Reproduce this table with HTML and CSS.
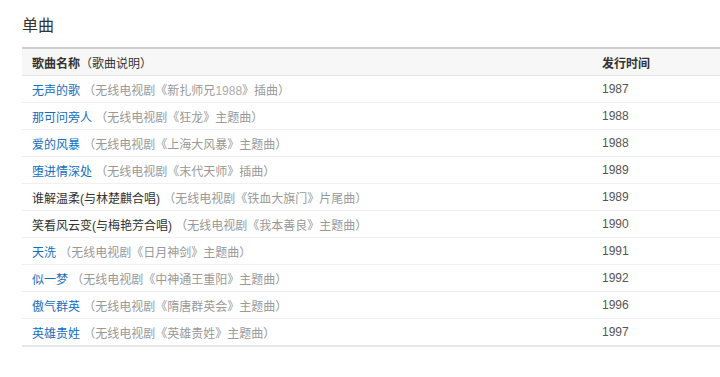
FILE: index.html
```html
<!DOCTYPE html>
<html lang="zh">
<head>
<meta charset="utf-8">
<link rel="stylesheet" href="styles.css">
</head>
<body>
<div class="page">
  <h3 class="title">单曲</h3>
  <table class="songs">
    <thead>
      <tr><th class="c-name"><b>歌曲名称</b><span class="sub">（歌曲说明）</span></th><th class="c-year"><b>发行时间</b></th></tr>
    </thead>
    <tbody>
      <tr><td><a class="song">无声的歌</a> <span class="desc">（无线电视剧《新扎师兄<span class="num">1988</span>》插曲）</span></td><td class="year">1987</td></tr>
      <tr><td><a class="song">那可问旁人</a> <span class="desc">（无线电视剧《狂龙》主题曲）</span></td><td class="year">1988</td></tr>
      <tr><td><a class="song">爱的风暴</a> <span class="desc">（无线电视剧《上海大风暴》主题曲）</span></td><td class="year">1988</td></tr>
      <tr><td><a class="song">堕进情深处</a> <span class="desc">（无线电视剧《末代天师》插曲）</span></td><td class="year">1989</td></tr>
      <tr><td><span class="plain">谁解温柔(与林楚麒合唱)</span> <span class="desc">（无线电视剧《铁血大旗门》片尾曲）</span></td><td class="year">1989</td></tr>
      <tr><td><span class="plain">笑看风云变(与梅艳芳合唱)</span> <span class="desc">（无线电视剧《我本善良》主题曲）</span></td><td class="year">1990</td></tr>
      <tr><td><a class="song">天洗</a> <span class="desc">（无线电视剧《日月神剑》主题曲）</span></td><td class="year">1991</td></tr>
      <tr><td><a class="song">似一梦</a> <span class="desc">（无线电视剧《中神通王重阳》主题曲）</span></td><td class="year">1992</td></tr>
      <tr><td><a class="song">傲气群英</a> <span class="desc">（无线电视剧《隋唐群英会》主题曲）</span></td><td class="year">1996</td></tr>
      <tr><td><a class="song">英雄贵姓</a> <span class="desc">（无线电视剧《英雄贵姓》主题曲）</span></td><td class="year">1997</td></tr>
    </tbody>
  </table>
</div>
</body>
</html>
```
FILE: styles.css
```css
html, body {
  margin: 0;
  padding: 0;
  background: #fff;
}
body {
  font-family: "Liberation Sans", Arial, "Noto Sans CJK SC", sans-serif;
  font-size: 12px;
  color: #333;
}
.page {
  padding: 15px 0 0 22px;
}
.title {
  margin: 0 0 10px 0;
  height: 22px;
  line-height: 22px;
  font-size: 16px;
  font-weight: normal;
  color: #333;
}
.songs {
  width: 698px;
  border-collapse: collapse;
  border-top: 2px solid #cfcfcf;
  border-bottom: 2px solid #e6e6e6;
}
.songs th {
  background: #f7f7f7;
  height: 26px;
  padding: 0 10px;
  text-align: left;
  font-weight: normal;
  border-bottom: 1px solid #e4e4e4;
  color: #333;
}
.songs th b {
  font-weight: bold;
}
.songs .c-name {
  width: 550px;
}
.songs td {
  height: 26px;
  padding: 0 10px;
  border-bottom: 1px solid #f0f0f0;
  white-space: nowrap;
}
.songs tbody tr:last-child td {
  border-bottom: none;
}
.song {
  color: #136ec2;
  text-decoration: none;
}
.plain {
  color: #333;
}
.desc {
  color: #999;
}
.desc .num {
  color: #aaa;
}
.year {
  color: #555;
}
```
